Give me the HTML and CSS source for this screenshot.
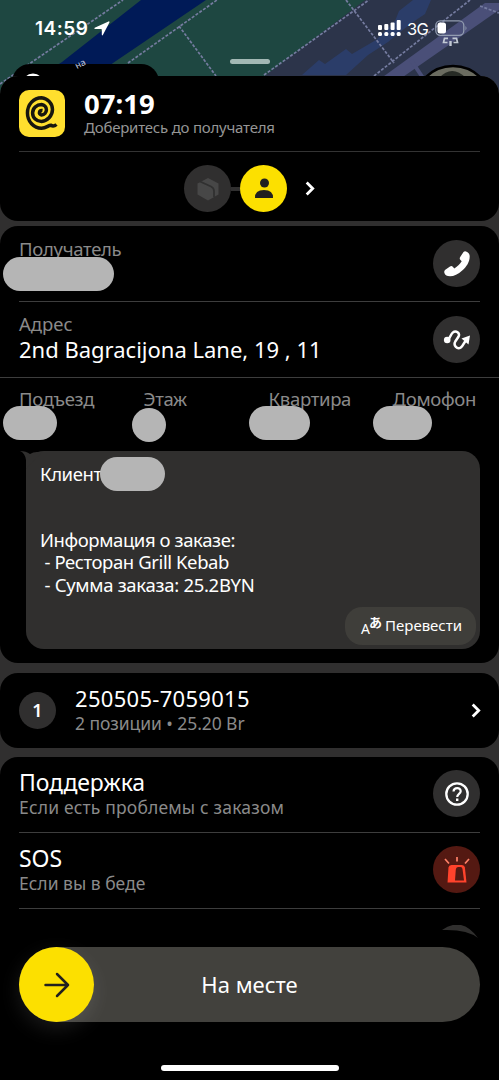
FILE: index.html
```html
<!DOCTYPE html>
<html lang="ru">
<head>
<meta charset="utf-8">
<title>Заказ</title>
<link rel="stylesheet" href="styles.css">
</head>
<body>
<div class="phone">
  <svg class="map" width="499" height="100" viewBox="0 0 499 100">
    <rect width="499" height="100" fill="#1e4741"/>
    <path d="M365 0H499V100H240L266 75Z" fill="#2c344a"/>
    <path d="M141 0H206L113 63L98 76H40L62 62Z" fill="#001a57"/>
    <path d="M413 0H431L425 14L416 20L400 32L388 42L368 55L346 75H302L319 60L325 64L346 49L352 54L376 40L395 21L399 11Z" fill="#2b3d69"/>
    <path d="M380 79L485 3H499V10L400 79Z" fill="#4a4f78"/>
    <path d="M411 60L423 78" stroke="#4a4f78" stroke-width="4"/>
    <g fill="none" stroke="#757ca0" stroke-width="1.7" stroke-dasharray="3 1.6">
      <path d="M0 84L32 62L123 0M128 63L217 0M179 26L216 76M264 75L369 0M346 0L394 63M374 76L470 0M480 6L499 13"/>
    </g>
    <rect x="12" y="64" width="147" height="36" rx="18" fill="#000"/>
    <circle cx="33" cy="84" r="10.500" fill="#fff"/>
    <circle cx="453" cy="105" r="39" fill="#6b6c60" stroke="#000" stroke-width="2.500"/>
    <path d="M439 78Q452 64 466 78Z" fill="#272b25"/>
    <text class="street" x="77" y="69" transform="rotate(-28 77 69)">на</text>
  </svg>

  <header class="status">
    <span class="clock">14:59</span>
    <svg class="locate" width="16" height="15" viewBox="0 0 16 15"><path d="M.7 6.700Q-.3 7.800 1.200 8H7.200Q7.800 8 7.800 8.700V13.500Q8 15.300 9 13.800L15.400 1.500Q15.800 .2 14.500 .4Z" fill="#fff"/></svg>
    <svg class="signal" width="24" height="17" viewBox="0 0 24 17" fill="#fff">
      <rect x="0" y="5" width="4" height="5" rx="1"/><rect x="6.300" y="4" width="4" height="6" rx="1"/><rect x="12.600" y="2.500" width="4" height="7.500" rx="1"/><rect x="18.700" y="0" width="4" height="10" rx="1"/>
      <rect x="0" y="12" width="4" height="4" rx="1.500"/><rect x="6.300" y="12" width="4" height="4" rx="1.500"/><rect x="12.600" y="12" width="4" height="4" rx="1.500"/><rect x="18.700" y="12" width="4" height="4" rx="1.500"/>
    </svg>
    <span class="network">3G</span>
    <svg class="battery" width="33" height="28" viewBox="0 0 33 28">
      <rect x=".8" y=".8" width="28" height="14.500" rx="4.500" fill="none" stroke="#929cb0" stroke-width="1.300"/>
      <rect x="2.500" y="2.500" width="8.500" height="11" rx="2.500" fill="#fff"/>
      <path d="M30.500 6Q32.500 8.200 30.500 10.500Z" fill="#929cb0"/>
      <path d="M13 18.300H9.500L8.500 22.500H12.500M17.500 18.300H21.500L22.500 22.500H18.500" fill="none" stroke="#c2c9d4" stroke-width="1.700"/>
      <path d="M15.500 21V26" stroke="#c2c9d4" stroke-width="2.400"/>
    </svg>
  </header>
  <div class="grabber"></div>

  <main class="sheet">
    <section class="card trip">
      <div class="trip-head">
        <svg class="logo" width="46" height="47" viewBox="0 0 46 47">
          <rect width="46" height="47" rx="10" fill="#ffdf2e"/>
          <path d="M23.500 20.500A2.500 2.200 0 0 0 22.500 25A5.700 5.300 0 0 0 22.500 14.500A8.700 8.300 0 0 0 22.500 31.500A12.600 12 0 0 0 22.500 7.700A14 15.200 0 0 0 22.500 38.200C27.500 38.200 29.500 35 32 35.300Q34.500 37 37.500 34.500" fill="none" stroke="#17160f" stroke-width="3.500"/>
        </svg>
        <div>
          <h1 class="timer">07:19</h1>
          <p class="hint">Доберитесь до получателя</p>
        </div>
      </div>
      <div class="stages">
        <span class="stage"><svg width="24" height="26" viewBox="0 0 24 26"><path d="M12 2L22.500 7.500V18.500L12 24.500L1.500 18.500V7.500Z" fill="#474747"/><path d="M4 5.500L15 10.500Q18 12 18 15V21" fill="none" stroke="#303030" stroke-width="1.800"/></svg></span>
        <i class="link"></i>
        <span class="stage active"><svg width="20" height="21" viewBox="0 0 20 21" fill="#21201f"><circle cx="10.500" cy="5" r="4.500"/><path d="M1 20Q.7 12 10 12T19 20Z"/></svg></span>
        <svg class="chevron stage-next" width="10" height="15" viewBox="0 0 10 15"><path d="M1.700 1.500L7.700 7.500L1.700 13.500"/></svg>
      </div>
    </section>

    <section class="card details">
      <div class="row recipient">
        <p class="label">Получатель</p>
        <span class="mask mask-name"></span>
        <span class="action"><svg width="26" height="26" viewBox="0 0 26 26"><path d="M19.500 1Q20.500 0 22 .4Q25.700 1.500 25.700 5.500C25.700 11 22.500 15.800 18.500 19.300C14 23.300 10 25.300 6 25.300Q1.500 25.300 .4 22Q-.2 19.800 1.300 18.700L6 15.500Q7.700 14.500 9 16L10.300 17.500C13 15.800 16.200 13 17.700 10.200L16.300 8.800Q15.200 7.500 16.200 6Z" fill="#fff"/></svg></span>
      </div>
      <div class="row address">
        <p class="label">Адрес</p>
        <p class="street-name">2nd Bagracijona Lane, 19 , 11</p>
        <span class="action"><svg width="28" height="22" viewBox="0 0 28 22" fill="none" stroke="#fff" stroke-width="2.500"><circle cx="4.200" cy="11" r="3.300" fill="#fff" stroke="none"/><path d="M4.500 11C7.500 9 7.500 5.500 9.700 3.600C13 .9 17.500 4 15.400 7.800L12.300 12.500C10 16.500 14.300 21 17.800 18.500C20.600 16.500 20.500 13.600 23.600 11"/><path d="M27 6.500L18.500 9.500L25.500 15.500Z" fill="#fff" stroke="none"/></svg></span>
      </div>
      <div class="fields">
        <div class="field"><p class="label">Подъезд</p><span class="mask mask-entry"></span></div>
        <div class="field"><p class="label">Этаж</p><span class="mask mask-floor"></span></div>
        <div class="field"><p class="label">Квартира</p><span class="mask mask-flat"></span></div>
        <div class="field"><p class="label">Домофон</p><span class="mask mask-intercom"></span></div>
      </div>
      <div class="message">
        <svg class="tail" width="22" height="18" viewBox="0 0 22 18"><path d="M0 0Q5 2 6 9V18L22 1H17Q13 1 10 3Q6 0 0 0Z" fill="#302f2e"/></svg>
        <p>Клиент</p>
        <span class="mask mask-client"></span>
        <p class="info">Информация о заказе:</p>
        <p class="item"> - Ресторан Grill Kebab</p>
        <p class="sum"> - Сумма заказа: 25.2BYN</p>
        <button class="translate"><span class="lang"><b>A</b><i>あ</i></span><span class="translate-text">Перевести</span></button>
      </div>
    </section>

    <section class="card order">
      <span class="number">1</span>
      <div>
        <h2 class="order-id">250505-7059015</h2>
        <p class="order-sum">2 позиции • 25.20 Br</p>
      </div>
      <svg class="chevron order-next" width="10" height="15" viewBox="0 0 10 15"><path d="M1.700 1.500L7.700 7.500L1.700 13.500"/></svg>
    </section>

    <section class="card help">
      <div class="row help-row">
        <h2 class="title">Поддержка</h2>
        <p class="sub sub-support">Если есть проблемы с заказом</p>
        <span class="action"><svg width="24" height="24" viewBox="0 0 24 24" fill="none" stroke="#fff"><circle cx="12" cy="12" r="10.700" stroke-width="2.300"/><path d="M8.500 9.500C8.800 4.900 15.800 5 15.700 9.300C15.600 11.800 12.200 12 12.200 15" stroke-width="2.200"/><path d="M12.200 16.500V19" stroke-width="2.400"/></svg></span>
      </div>
      <div class="row help-row">
        <h2 class="title">SOS</h2>
        <p class="sub">Если вы в беде</p>
        <span class="action alarm"><svg width="28" height="28" viewBox="0 0 28 28"><path d="M4.500 26.500L5.500 11.500Q5.800 9 8.500 9H19Q21.500 9 21.900 11.500L23.500 26.500Z" fill="#ff432c"/><path d="M12 24.500L12.800 13.500Q13 11 15 11H17.500Q19.300 11 19.500 13L21 24.500Z" fill="#541912"/><path d="M2 3L6 7.500M14 1V5.500M26 3L22 7.500" stroke="#ff8168" stroke-width="1.700" fill="none"/></svg></span>
      </div>
      <div class="peek"><svg width="37" height="14" viewBox="0 0 37 14"><path d="M0 5Q20 -9 36 13Q25 4 0 5Z" fill="#302f2e"/></svg></div>
    </section>
  </main>

  <footer class="footer">
    <div class="slider">
      <span class="thumb"><svg width="26" height="26" viewBox="0 0 26 26" fill="none" stroke="#21201f" stroke-width="2.500"><path d="M1.500 13H24M13 2L24 13L13 24" stroke-linecap="round" stroke-linejoin="round"/></svg></span>
      <span class="slider-text">На месте</span>
    </div>
    <div class="home"></div>
  </footer>
</div>
</body>
</html>
```
FILE: styles.css
```css
* { box-sizing: border-box; margin: 0; padding: 0; }
body { background: #000; color: #fff; font-family: "Noto Sans", "Noto Sans CJK JP", sans-serif; }
.phone { position: relative; width: 499px; height: 1080px; overflow: hidden; display: flex; flex-direction: column; background: #000; }
.map { position: absolute; left: 0; top: 0; }
.street { font: 9px "Noto Sans", sans-serif; fill: #c3cbe0; }

.status { position: relative; height: 59px; flex: none; display: flex; align-items: flex-start; padding: 20px 0 0 35px; }
.clock { font: 600 19px/18px Inter, sans-serif; width: 59px; letter-spacing: .5px; }
.locate { margin-top: 1px; }
.signal { margin-left: 268px; }
.network { font: 400 16.500px/19px Inter, sans-serif; margin-left: 5px; width: 24px; white-space: nowrap; letter-spacing: -.6px; }
.battery { margin-left: 4px; }
.grabber { position: relative; flex: none; align-self: center; width: 40px; height: 5px; border-radius: 3px; background: #a2b8b4; margin-bottom: 12px; }

.sheet { position: relative; flex: none; display: flex; flex-direction: column; background: #302f2f; border-radius: 18px 18px 0 0; height: 871px; overflow: hidden; }
.card { position: relative; flex: none; background: #000; border-radius: 18px; }
.trip { height: 145px; margin-bottom: 5px; }
.trip-head { height: 76px; margin: 0 19px; padding-top: 12px; display: flex; gap: 19px; border-bottom: 1px solid #333; }
.logo { margin-top: 2px; }
.timer { font-size: 27.500px; line-height: 31px; font-weight: 700; }
.hint { font-size: 15px; line-height: 17px; color: #969696; white-space: nowrap; letter-spacing: -.22px; }
.stages { height: 73px; display: flex; align-items: center; padding-left: 184px; }
.stage { width: 47px; height: 47px; border-radius: 50%; background: #302f2f; display: flex; align-items: center; justify-content: center; }
.stage.active { background: #fce000; }
.link { width: 9px; height: 4px; background: #302f2f; }
.chevron { fill: none; stroke: #fff; stroke-width: 2.800; }
.stage-next { margin-left: 18px; }

.details { height: 437px; margin-bottom: 10px; }
.row { position: relative; padding: 10px 19px 0; }
.recipient { height: 75px; }
.address { height: 77px; border-bottom: 1px solid #3d3d3d; padding-top: 10px; }
.address .action { top: 15px; }
.address::before, .help-row + .help-row::before { content: ""; position: absolute; left: 19px; right: 19px; top: 0; height: 1px; background: #3d3d3d; }
.label { font-size: 18.500px; line-height: 25px; color: #8a8a8a; white-space: nowrap; letter-spacing: -.3px; }
.address .label { letter-spacing: 0; }
.street-name { font-size: 22px; line-height: 26px; white-space: nowrap; }
.action { position: absolute; right: 19px; top: 14px; width: 47px; height: 47px; border-radius: 50%; background: #302f2f; display: flex; align-items: center; justify-content: center; }
.mask { position: absolute; height: 34px; border-radius: 17px; background: #b5b5b5; }
.mask-name { left: 3px; top: 31px; width: 111px; }
.fields { height: 73px; padding: 8px 0 0 19px; display: grid; grid-template-columns: 124.500px 125px 124px 1fr; }
.field { position: relative; }
.mask-entry { left: -16px; top: 20px; width: 54px; }
.mask-floor { left: -12px; top: 22px; width: 34px; }
.mask-flat { left: -20px; top: 20px; width: 61px; }
.mask-intercom { left: -20px; top: 20px; width: 59px; }
.message { position: relative; height: 198px; margin: 0 19px 0 26px; padding: 12px 14px 0; border-radius: 18px; background: #302f2e; font-size: 18.500px; line-height: 22.200px; letter-spacing: -.4px; }
.message p { white-space: pre; }
.message .sum { letter-spacing: -.3px; }
.tail { position: absolute; left: -6px; top: 0; }
.mask-client { left: 74px; top: 6px; width: 65px; }
.message .info { margin-top: 44px; }
.translate { position: absolute; right: 4px; bottom: 4px; width: 131px; height: 38px; border: 0; border-radius: 17px; background: #3f3e3a; color: #fff; display: flex; align-items: center; padding-left: 16px; font: 15px/22px "Noto Sans", sans-serif; }
.translate-text { margin-top: -3px; }
.lang { position: relative; width: 24px; height: 22px; }
.lang b { position: absolute; left: 0; top: 5px; font: 400 14px/18px "Noto Sans", sans-serif; }
.lang i { position: absolute; left: 8px; top: -2px; font: 700 13px/18px "Noto Sans CJK JP", sans-serif; }

.order { height: 75px; margin-bottom: 9px; padding: 12px 0 0 19px; display: flex; }
.number { width: 37px; height: 37px; margin: 7px 19px 0 0; border-radius: 50%; background: #302f2f; font-size: 18px; font-weight: 600; line-height: 37px; text-align: center; }
.order-id { font-size: 22px; line-height: 26px; font-weight: 400; letter-spacing: .3px; }
.order-sum { font-size: 17.500px; line-height: 24px; color: #8a8a8a; white-space: nowrap; letter-spacing: -.07px; }
.order-next { position: absolute; left: 471px; top: 30px; }

.help { height: 190px; border-radius: 18px 18px 0 0; }
.help-row { height: 75px; padding-top: 12px; }
.title { font-size: 23px; line-height: 26px; font-weight: 400; letter-spacing: -.1px; }
.sub { font-size: 17.500px; line-height: 24px; color: #8a8a8a; white-space: nowrap; }
.sub-support { letter-spacing: .17px; }
.help-row + .help-row { height: 76px; padding-top: 13px; }
.help-row:first-child .action { top: 13px; }
.alarm { background: #541912; }
.peek { position: relative; height: 39px; margin-left: 442px; padding-top: 14px; }
.peek::before { content: ""; position: absolute; left: -423px; top: 0; width: 461px; height: 1px; background: #3d3d3d; }

.footer { position: relative; flex: none; height: 133px; padding: 0 19px; background: #000; display: flex; flex-direction: column; align-items: center; }
.slider { width: 461px; height: 75px; border-radius: 38px; background: #42413d; display: flex; align-items: center; }
.thumb { flex: none; width: 75px; height: 75px; border-radius: 50%; background: #fce000; box-shadow: 0 7px 20px rgba(255,255,255,.1); display: flex; align-items: center; justify-content: center; }
.slider-text { width: 311px; text-align: center; font-size: 22px; line-height: 30px; margin-top: -2px; }
.home { width: 178px; height: 6px; margin-top: 43px; border-radius: 3px; background: #fff; }
```
